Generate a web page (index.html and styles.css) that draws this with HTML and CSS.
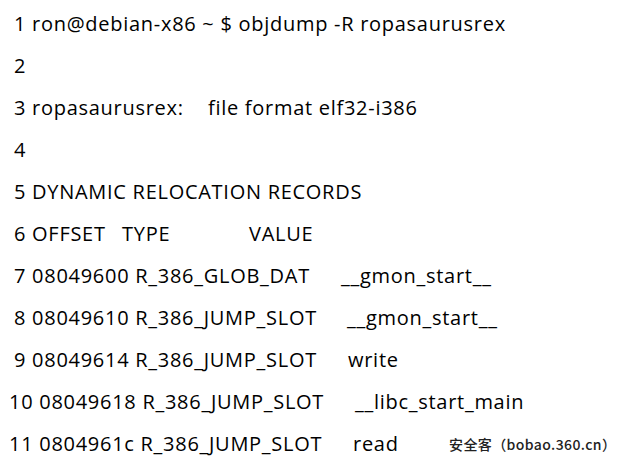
FILE: index.html
```html
<!DOCTYPE html>
<html>
<head>
<meta charset="utf-8">
<link rel="stylesheet" href="styles.css">
</head>
<body>
<div class="doc">
  <div class="line"><span>1 ron@debian-x86 ~ $ objdump -R ropasaurusrex</span></div>
  <div class="line"><span>2</span></div>
  <div class="line"><span class="c-l3">3 ropasaurusrex:</span><span>file format elf32-i386</span></div>
  <div class="line"><span>4</span></div>
  <div class="line"><span>5 DYNAMIC RELOCATION RECORDS</span></div>
  <div class="line"><span class="c-l6a">6 OFFSET</span><span class="c-l6b">TYPE</span><span>VALUE</span></div>
  <div class="line"><span class="c-l7">7 08049600 R_386_GLOB_DAT</span><span>__gmon_start__</span></div>
  <div class="line"><span class="c-l8">8 08049610 R_386_JUMP_SLOT</span><span>__gmon_start__</span></div>
  <div class="line"><span class="c-l9">9 08049614 R_386_JUMP_SLOT</span><span>write</span></div>
  <div class="line wide"><span class="c-l10">10 08049618 R_386_JUMP_SLOT</span><span>__libc_start_main</span></div>
  <div class="line wide"><span class="c-l11">11 0804961c R_386_JUMP_SLOT</span><span>read</span></div>
  <div class="mark">安全客（bobao.360.cn）</div>
</div>
</body>
</html>
```
FILE: styles.css
```css
html, body {
  margin: 0;
  padding: 0;
  background: #ffffff;
}
.doc {
  position: relative;
  width: 620px;
  height: 467px;
  padding-top: 8px;
  box-sizing: border-box;
  font-family: "Open Sans", "Noto Sans", sans-serif;
  font-size: 20px;
  letter-spacing: 0.72px;
  color: #000000;
}
.line {
  display: flex;
  height: 42px;
  line-height: 32px;
  padding-left: 14px;
  white-space: pre;
}
.line.wide {
  padding-left: 9px;
}
.line > span {
  flex: none;
}
.c-l3 { width: 194px; }
.c-l6a { width: 108px; }
.c-l6b { width: 127px; }
.c-l7 { width: 327px; }
.c-l8 { width: 333px; }
.c-l9 { width: 334px; }
.c-l10 { width: 346px; }
.c-l11 { width: 344px; }
.mark {
  position: absolute;
  left: 449px;
  top: 434px;
  font-family: "Noto Sans CJK SC", sans-serif;
  font-size: 14px;
  font-weight: 500;
  letter-spacing: 0.4px;
  color: #222222;
  white-space: pre;
  text-shadow: 0 0 1px #ffffff;
}
```
